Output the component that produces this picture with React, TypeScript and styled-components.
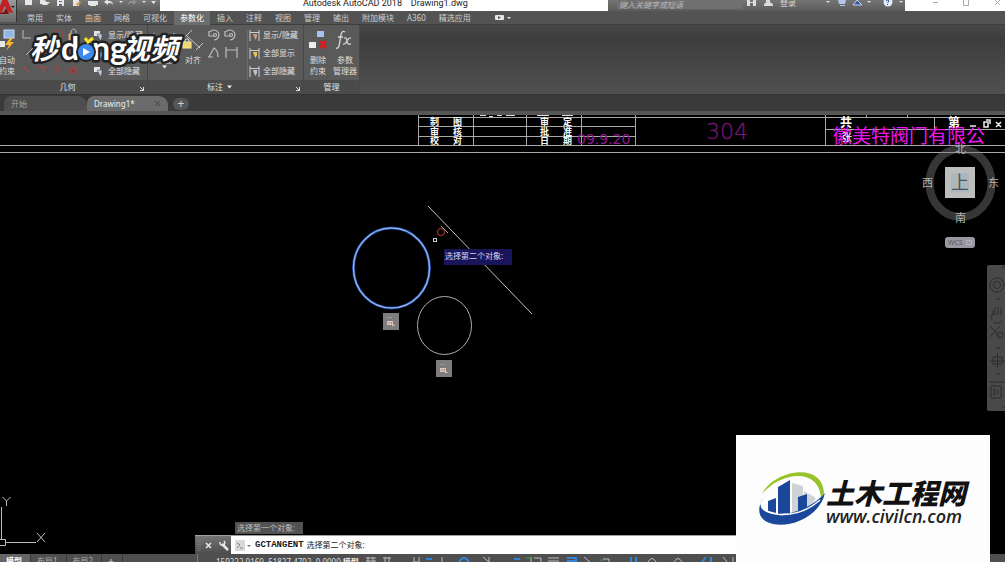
import React from "react";
import styled, { createGlobalStyle } from "styled-components";

const sans = '"Noto Sans", "Noto Sans CJK SC", sans-serif';

const GlobalStyle = createGlobalStyle`
  * { box-sizing: border-box; }
  body { margin: 0; background: #000; font-family: ${sans}; }
  button { border: 0; padding: 0; margin: 0; background: none; color: inherit; font: inherit; white-space: nowrap; }
  svg { display: block; flex: none; }
`;

const Window = styled.div`
  position: relative;
  display: flex;
  flex-direction: column;
  height: 100vh;
  overflow: hidden;
  color: #d2d2d2;
  font-size: 8px;
  line-height: 12px;
`;

/* Title bar */
const TitleBar = styled.header`
  display: flex;
  height: 11px;
  background: #fff;
`;
const QuickAccess = styled.div`
  width: 160px;
  padding-left: 22px;
  background: linear-gradient(#777, #5c5c5c);
  overflow: hidden;
`;
const Caption = styled.h1`
  flex: 1;
  margin: 0;
  padding-left: 143px;
  color: #222;
  font: 400 9px/7px Roboto, sans-serif;
  white-space: pre;
`;
const SearchArea = styled.div`
  display: flex;
  width: 297px;
  background: linear-gradient(#757575, #5b5b5b);
  overflow: hidden;
`;
const SearchBox = styled.input`
  width: 126px;
  height: 9px;
  margin-left: 9px;
  padding: 0 2px;
  border: 0;
  background: #707070;
  font: italic 8px/8px ${sans};
  &::placeholder { color: #b4b4b4; line-height: 5px; }
`;
const SignIn = styled.button`
  width: 22px;
  height: 5px;
  line-height: 5px;
  color: #d5d5d5;
`;
const WindowControls = styled.div`
  width: 100px;
`;
const AppButton = styled.button`
  position: absolute;
  top: 0;
  left: 0;
  width: 17px;
  height: 22px;
  background: linear-gradient(#9a9a9a, #6a6a6a);
  border-right: 1px solid #333;
`;

/* Ribbon */
const MenuTabs = styled.nav`
  display: flex;
  gap: 1px;
  height: 14px;
  padding-left: 21px;
  background: #535353;
  border-bottom: 1px solid #3e3e3e;
`;
const MenuTab = styled.button<{ $active?: boolean }>`
  height: 14px;
  padding: 0 6px;
  line-height: 14px;
  color: ${(p) => (p.$active ? "#fff" : "#cfcfcf")};
  background: ${(p) => (p.$active ? "#6c6c6c" : "transparent")};
`;
const Ribbon = styled.div`
  display: flex;
  height: 70px;
  background: linear-gradient(#484848, #3d3d3d 20%, #505050);
  border-bottom: 1px solid #333;
`;
const Panel = styled.section<{ $width: number }>`
  display: flex;
  flex-direction: column;
  width: ${(p) => p.$width}px;
  border-right: 1px solid #484848;
  background: #5a5a5a;
`;
const PanelBody = styled.div`
  display: flex;
  flex: 1;
  overflow: hidden;
`;
const PanelTitle = styled.div<{ $launcher?: boolean }>`
  display: flex;
  align-items: center;
  justify-content: center;
  gap: 4px;
  position: relative;
  height: 14px;
  padding-right: ${(p) => (p.$launcher ? 12 : 0)}px;
  background: #4b4b4b;
  color: #e2e2e2;
`;
const Launcher = styled.svg`
  position: absolute;
  right: 3px;
  bottom: 3px;
`;
const BigTool = styled.button<{ $width: number }>`
  display: flex;
  flex-direction: column;
  align-items: center;
  width: ${(p) => p.$width}px;
  padding-top: 4px;
  line-height: 11px;
  color: #dedede;
`;
const ToolList = styled.div`
  display: flex;
  flex-direction: column;
  gap: 6px;
  padding-top: 4px;
`;
const ListTool = styled.button`
  display: flex;
  align-items: center;
  gap: 3px;
  height: 12px;
  color: #e2e2e2;
`;

/* File tabs */
const FileTabs = styled.nav`
  display: flex;
  align-items: flex-end;
  height: 20px;
  padding-left: 4px;
  background: #3a3a3a;
  border-bottom: 4px solid #565656;
`;
const FileTab = styled.button<{ $active?: boolean; $width: number }>`
  display: flex;
  align-items: center;
  justify-content: space-between;
  width: ${(p) => p.$width}px;
  height: 15px;
  padding: 0 8px 0 7px;
  border-radius: 7px 9px 0 0;
  color: ${(p) => (p.$active ? "#f0f0f0" : "#a2a2a2")};
  background: ${(p) => (p.$active ? "#6b6b6b" : "#4e4e4e")};
`;
const AddTab = styled.button`
  width: 16px;
  height: 12px;
  margin: 0 0 1px 5px;
  border-radius: 6px;
  background: #565656;
  font-size: 12px;
  line-height: 12px;
`;

/* Drawing area */
const Canvas = styled.main`
  position: relative;
  flex: 1;
  min-height: 0;
  overflow: hidden;
  background: #000;
`;
const Drawing = styled.svg`
  width: 100%;
  height: 100%;
  font-family: ${sans};
`;
const ViewCube = styled.svg`
  position: absolute;
  top: 24px;
  right: 0;
  font-family: ${sans};
`;
const NavBar = styled.aside`
  position: absolute;
  top: 150px;
  right: 0;
  width: 18px;
  height: 146px;
  border-radius: 2px 0 0 2px;
  background: #494949;
`;
const Prompt = styled.div`
  position: absolute;
  top: 134px;
  left: 444px;
  width: 68px;
  height: 16px;
  padding-left: 1px;
  background: #19155c;
  color: #d6d6ec;
  line-height: 14px;
  white-space: nowrap;
`;
const Axes = styled.svg`
  position: absolute;
  bottom: 0;
  left: 0;
`;
const CommandArea = styled.div`
  position: absolute;
  right: 15px;
  bottom: 0;
  left: 195px;
  color: #1b1b1b;
`;
const History = styled.div`
  width: 68px;
  height: 12px;
  margin: 0 0 1px 40px;
  padding-left: 2px;
  background: #525252;
  color: #bdbdbd;
  white-space: nowrap;
`;
const CommandLine = styled.label`
  display: flex;
  align-items: center;
  height: 19px;
  border-top: 1px solid #a0a0a0;
  background: #fff;
`;
const CommandTools = styled.span`
  width: 36px;
  height: 18px;
  margin-right: 4px;
  background: linear-gradient(#757575, #4c4c4c);
`;
const CommandName = styled.b`
  margin: 0 3px 0 4px;
  font: bold 9px/12px "Liberation Mono", monospace;
`;
const CommandInput = styled.input`
  flex: 1;
  min-width: 0;
  height: 12px;
  padding: 0;
  border: 0;
  outline: 0;
  color: #222;
  font: 8px/12px ${sans};
`;

/* Status bar */
const StatusBar = styled.footer`
  display: flex;
  height: 8px;
  background: #4f4f4f;
  overflow: hidden;
`;
const LayoutTabs = styled.nav`
  display: flex;
  width: 198px;
  border-right: 1px solid #777;
`;
const LayoutTab = styled.button<{ $active?: boolean }>`
  height: 14px;
  padding: 0 8px 0 6px;
  border-right: 1px solid #393939;
  color: ${(p) => (p.$active ? "#fff" : "#ababab")};
  background: ${(p) => (p.$active ? "#666" : "transparent")};
  font-weight: ${(p) => (p.$active ? 700 : 400)};
  line-height: 14px;
`;
const Coordinates = styled.span`
  padding: 0 2px 0 18px;
  color: #ddd;
  line-height: 16px;
  white-space: nowrap;
`;
const ModelSpace = styled.button`
  height: 16px;
  padding: 0 6px 0 0;
  color: #eee;
  font-weight: 700;
  line-height: 16px;
`;

/* Overlaid brand marks */
const VideoMark = styled.svg`
  position: absolute;
  top: 29px;
  left: 26px;
  font-family: ${sans};
`;
const SiteCard = styled.a`
  position: absolute;
  right: 15px;
  bottom: 0;
  width: 254px;
  height: 127px;
  padding: 35px 0 0 22px;
  display: flex;
  background: #fdfdfd;
  color: #111;
  text-decoration: none;
`;
const SiteText = styled.span`
  display: flex;
  flex-direction: column;
  padding-top: 7px;
  white-space: nowrap;
`;
const SiteName = styled.strong`
  font: italic 900 28px/30px "Noto Sans CJK SC", sans-serif;
`;
const SiteUrl = styled.span`
  color: #222;
  font: italic 600 18px/18px "Open Sans", sans-serif;
`;

const MENU = ["常用", "实体", "曲面", "网格", "可视化", "参数化", "插入", "注释", "视图", "管理", "输出", "附加模块", "A360", "精选应用"];

const GRID_LABELS: [string, number, number][] = [
  ["制", 430, 10], ["图", 453, 10], ["审", 540, 10], ["定", 563, 10],
  ["审", 430, 20], ["核", 453, 20], ["批", 540, 20], ["准", 563, 20],
  ["校", 430, 29], ["对", 453, 29], ["日", 540, 29], ["期", 563, 29],
];

const Arrow = () => (
  <svg width="5" height="4"><path d="M0 0.5h5L2.5 3.5z" fill="#eee" /></svg>
);
const Corner = () => (
  <Launcher width="4" height="4"><path d="M0 0.5h1M3.5 0v4M0 3.5h4M1 1l2 2" stroke="#ddd" fill="none" /></Launcher>
);
const DimensionIcon = ({ tone }: { tone: string }) => (
  <svg width="12" height="11" fill="none">
    <path d="M2 0v11M11 0v11M2 2.5h9" stroke="#cfcfcf" />
    <path d="M5 4h4v3L7.500 10 6 7z" fill={tone} />
  </svg>
);
const ConstraintIcon = () => (
  <svg width="12" height="11">
    <rect x="1" y="1" width="6" height="5" fill="#e3e3ec" />
    <path d="M4 4h5v3L7.5 11 6 8z" fill="#b9c7de" stroke="#444" strokeWidth=".5" />
  </svg>
);
const TangentMark = ({ x, y }: { x: number; y: number }) => (
  <g transform={`translate(${x} ${y})`}>
    <rect width="16" height="17" fill="#7d7d7d" />
    <path d="M4 4.500h5" stroke="#999" />
    <path d="M4 8h6v4H4zM9 10l3 3H9z" fill="#dcc4b6" />
    <path d="M6 9v2M8.500 9v2" stroke="#a0705c" strokeWidth=".7" />
  </g>
);

export default function App() {
  return (
    <Window>
      <GlobalStyle />
      <TitleBar>
        <QuickAccess>
          <svg width="138" height="10" fill="#e6e6e6">
            <path d="M3 0h7v5H3zM18 0h4l2 1v3h-6zM20 5l2-3h6l-3 3zM35 0h7v6h-7z" />
            <path d="M37 1h3v1h-3zM37 4h3v2h-3z" fill="#5b6c89" />
            <path d="M51 0h6v6h-6z" /><path d="M54 4l4-3 1 2-4 3z" fill="#d29a4a" />
            <path d="M66 1h10v4H66zM68 4h6v2h-6z" />
            <path d="M82 2l4-3v2c4 0 5 2 5 4-1-2-3-2-5-2v2zM97 1h4l-2 2z" />
            <path d="M115 2l-4-3v2c-4 0-5 2-5 4 1-2 3-2 5-2v2z" fill="#919191" />
            <path d="M120 1h4l-2 2zM129 1h5l-2.500 3z" />
          </svg>
        </QuickAccess>
        <Caption>{"Autodesk AutoCAD 2018    Drawing1.dwg"}</Caption>
        <SearchArea>
          <SearchBox aria-label="搜索" placeholder="键入关键字或短语" />
          <svg width="34" height="9" fill="#ddd">
            <path d="M4 0h3v6H4zM10 0h3v6h-3zM7 2h3v1H7zM21 5c0-2 2-3 4-3s5 1 5 3v1h-9zM23 0h4v2h-4z" />
          </svg>
          <SignIn>登录</SignIn>
          <svg width="104" height="10" fill="#ddd">
            <path d="M27 1h4l-2 2zM68 1h4l-2 2zM100 1h4l-2 2z" />
            <path d="M39 0h8l-1 4h-6zM41 5h5v1h-5z" fill="#b5c5e5" />
            <path d="M54 5l4-5 5 5z" fill="#31569d" stroke="#c8d4e8" />
            <circle cx="89" cy="2" r="4.500" fill="#e7eefb" />
            <path d="M87 1q2-2 3 0l-1.500 2M88.500 4v1" stroke="#31569d" fill="none" />
          </svg>
        </SearchArea>
        <WindowControls>
          <svg width="100" height="8" fill="none" stroke="#aaa">
            <path d="M28 2.500h5M58.500 0v5.500h5V0M90 0l5 5M95 0l-5 5" />
          </svg>
        </WindowControls>
      </TitleBar>

      <MenuTabs>
        {MENU.map((name) => (
          <MenuTab key={name} $active={name === "参数化"}>{name}</MenuTab>
        ))}
        <MenuTab aria-label="显示选项">
          <svg width="28" height="8">
            <rect x="11" y="1" width="9" height="5" rx="1" fill="#e6e6e6" />
            <path d="M14 2l3 1.500-3 1.500z" fill="#555" />
            <path d="M23 3h4l-2 2z" fill="#e6e6e6" />
          </svg>
        </MenuTab>
      </MenuTabs>
      <AppButton aria-label="应用程序菜单">
        <svg width="16" height="22">
          <path d="M-4 15L5-6l8 19-5-1-3-6-4 7z" fill="#c22126" />
          <path d="M-2 14l6-2 2-4 3 6z" fill="#7d1015" />
          <path d="M11 6h4l-2 2z" fill="#222" />
        </svg>
      </AppButton>

      <Ribbon>
        <Panel $width={148}>
          <PanelBody>
            <BigTool $width={14}>
              <svg width="16" height="25">
                <rect x="5" y="1" width="10" height="8" fill="#8fb6e5" stroke="#cddcf0" />
                <rect x="0" y="12" width="6" height="6" fill="#e7e7e7" />
                <path d="M11 9l-5 7h4l-3 6 8-9h-4l3-4z" fill="#f4b632" />
              </svg>
              自动<br />约束
            </BigTool>
            <svg width="79" height="57" fill="none" stroke="#b9b9b9">
              <path d="M9 5v8h8" /><path d="M12 30l8-8M28 26h12" />
              <circle cx="44" cy="10" r="5" stroke="#a04848" />
              <path d="M57 9v-3q3-4 5 0v3" /><path d="M55 9h9v6h-9z" fill="#d3a746" />
              <path d="M9 41l7 7M24 42h6v6M41 41q8 3 0 7" stroke="#a04848" strokeWidth="1.500" />
              <path d="M56 43h6v5h-6z" fill="#8a3d3d" stroke="#a04848" />
            </svg>
            <ToolList>
              <ListTool><ConstraintIcon />显示/隐藏</ListTool>
              <ListTool><ConstraintIcon />全部显示</ListTool>
              <ListTool><ConstraintIcon />全部隐藏</ListTool>
            </ToolList>
          </PanelBody>
          <PanelTitle $launcher><span>几何</span><Corner /></PanelTitle>
        </Panel>
        <Panel $width={156}>
          <PanelBody>
            <BigTool $width={32}>
              <svg width="22" height="25" fill="none" stroke="#c8c8c8"><path d="M1 4v14M21 4v14M1 7h20" /></svg>
              线性
              <Arrow />
            </BigTool>
            <BigTool $width={26}>
              <svg width="22" height="25" fill="none" stroke="#c8c8c8">
                <path d="M2 9l8-8M4 6l14 13M14 21l7-7M1 11v-2" />
                <path d="M3 13v-2q2-3 4 0v2" stroke="#eee" />
                <rect x="1" y="13" width="8" height="6" fill="#f2d56d" stroke="#f7e8a4" />
              </svg>
              对齐
            </BigTool>
            <svg width="42" height="56" fill="none" stroke="#bcbcbc" strokeWidth="1.200">
              <path d="M4 7a5 5 0 1 1 4 8M3 6v5h5M20 7a5 5 0 1 1 4 8M19 6v5h5" />
              <circle cx="9" cy="10" r="1.500" /><circle cx="25" cy="10" r="1.500" />
              <path d="M3 32l5-9q4 2 4 9M2 32h5M20 22v11M31 22v11M20 25h11" />
              <path d="M41.500 5v51" stroke="#6b6b6b" />
            </svg>
            <ToolList>
              <ListTool><DimensionIcon tone="#c99b82" />显示/隐藏</ListTool>
              <ListTool><DimensionIcon tone="#f0c453" />全部显示</ListTool>
              <ListTool><DimensionIcon tone="#b4c6e6" />全部隐藏</ListTool>
            </ToolList>
          </PanelBody>
          <PanelTitle $launcher><span>标注</span><Arrow /><Corner /></PanelTitle>
        </Panel>
        <Panel $width={56}>
          <PanelBody>
            <BigTool $width={28}>
              <svg width="20" height="25">
                <rect x="9" y="2" width="7" height="6" fill="#a6c4ef" />
                <rect x="1" y="13" width="7" height="6" fill="#ececec" />
                <path d="M12 12l6 7M18 12l-6 7" stroke="#c92020" strokeWidth="3" />
              </svg>
              删除<br />约束
            </BigTool>
            <BigTool $width={26}>
              <svg width="20" height="25" fill="none" stroke="#d6d6d6" strokeWidth="1.300">
                <path d="M10 3q-3-2-4 3L4 17q-1 3-3 2M3 8h5" />
                <path d="M9 9q3-1 3 3t4 3M16 9q-2-1-4 3t-4 3" />
              </svg>
              参数<br />管理器
            </BigTool>
          </PanelBody>
          <PanelTitle><span>管理</span></PanelTitle>
        </Panel>
      </Ribbon>

      <FileTabs>
        <FileTab $width={83}>开始</FileTab>
        <FileTab $width={81} $active>
          Drawing1*
          <svg width="5" height="5"><path d="M0 0l5 5M5 0L0 5" stroke="#444" /></svg>
        </FileTab>
        <AddTab aria-label="新图形">+</AddTab>
      </FileTabs>

      <Canvas>
        <Drawing>
          <g stroke="#a9a9a9" shapeRendering="crispEdges">
            <path d="M418.500 0v30M473.500 0v30M526.500 0v30M581.500 0v30M635.500 0v30M418 11.500h218M418 21.500h218" />
            <path d="M825.500 0v30M934.500 2v12M866.500 0v2M907.500 0v2" />
            <line x1="418" x2="100%" y1="2.500" y2="2.500" />
            <line x1="825" x2="100%" y1="14.500" y2="14.500" />
            <line x1="0" x2="100%" y1="30.500" y2="30.500" />
            <line x1="0" x2="100%" y1="37.500" y2="37.500" />
          </g>
          <path d="M480 .5h6M489 1.500h4M497 .5h5M506 .5h9M537 .5h12M562 .5h11" stroke="#ddd" />
          <g fill="#fff" fontSize="9" fontWeight="700">
            {GRID_LABELS.map(([label, x, y]) => (
              <text key={`${x}-${y}`} x={x} y={y}>{label}</text>
            ))}
          </g>
          <text x="577" y="29" fill="#8f178f" fontSize="14" fontFamily="DejaVu Sans">09.9.20</text>
          <text x="706" y="24" fill="#7a147a" fontSize="22" fontFamily="DejaVu Sans" fontWeight="200" stroke="#7a147a" strokeWidth=".3">304</text>
          <text x="833" y="28" fill="#ea16ea" fontSize="19">徽美特阀门有限公</text>
          <g fill="#fff" fontSize="12" fontWeight="700">
            <text x="840" y="12">共</text>
            <text x="948" y="12">第</text>
          </g>
          <text x="842" y="26" fill="#fff" fontSize="10">张</text>
          <path d="M970 11h6M984 7h4v5h-4zM986 5h4v4M996 7l5 5M1001 7l-5 5" stroke="#eee" strokeWidth="1.500" fill="none" />

          <g fill="none">
            <ellipse cx="391.500" cy="153" rx="38" ry="40" stroke="#173a86" strokeWidth="3" />
            <ellipse cx="391.500" cy="153" rx="38" ry="40" stroke="#8fb2ef" strokeWidth="1.500" />
            <ellipse cx="444.500" cy="210.500" rx="27" ry="29" stroke="#aeaeae" />
            <path d="M428 91L532 199" stroke="#c4c1bb" />
            <circle cx="441" cy="117" r="3.500" stroke="#852720" strokeWidth="1.500" />
            <path d="M441 111l7 7" stroke="#aaa" />
            <rect x="433.500" y="123.500" width="3" height="3" stroke="#ccc" />
          </g>
          <TangentMark x={383} y={198} />
          <TangentMark x={436} y={245} />
        </Drawing>
        <Prompt>选择第二个对象:</Prompt>

        <ViewCube width="90" height="114">
          <ellipse cx="45.500" cy="44" rx="31" ry="34" fill="none" stroke="#777" strokeOpacity=".45" strokeWidth="8" />
          <rect x="30" y="28" width="30" height="31" fill="#bcbebe" />
          <rect x="36" y="34" width="18" height="19" fill="#adb7ba" />
          <g fill="#b2b2b2" fontSize="11">
            <text x="40" y="14">北</text>
            <text x="7" y="48">西</text>
            <text x="73" y="48">东</text>
            <text x="40" y="83">南</text>
          </g>
          <text x="36" y="50" fill="#45565f" fontSize="18">上</text>
          <rect x="30" y="98" width="30" height="11" rx="3" fill="#9998a2" />
          <text x="33" y="106" fill="#5b5a63" fontSize="7">WCS</text>
          <rect x="51.500" y="101.500" width="5" height="4" fill="none" stroke="#b4b3bd" />
        </ViewCube>

        <NavBar aria-label="导航栏">
          <svg width="18" height="146" fill="none" stroke="#2d2d2d">
            <circle cx="10" cy="20" r="7" /><circle cx="10" cy="20" r="3.500" />
            <path d="M9 34h4M5 55q-3-6 1-5v-5M8 50v-8M11 50v-8M14 50v-7M6 57q5 3 9-1M3 61l10 11M13 61L3 72" />
            <circle cx="13" cy="70" r="3" /><path d="M9 83h4M10.500 88v15M3 96h15M6 92h9v7H6zM9 109h4M3 117h15M4 121h10v12H4z" />
            <path d="M7 124l5 3-5 3zM15 2h3M15 142h3" />
          </svg>
        </NavBar>

        <Axes width="50" height="64" fill="none" stroke="#bdbdbd">
          <path d="M2.500 7l4 4 4-4M6.500 11v5M1.500 17v32M0 49.500h5.500v6H0M5 52.500h31M37 43l8 9M45 43l-8 9" />
        </Axes>

        <CommandArea>
          <History>选择第一个对象:</History>
          <CommandLine>
            <CommandTools>
              <svg width="36" height="18" fill="none" stroke="#e8e8e8">
                <path d="M3 4v11M5 4v11" stroke="#888" strokeDasharray="1 1" />
                <path d="M11 7l5 5M16 7l-5 5" strokeWidth="1.500" />
                <path d="M27 8l6 6" strokeWidth="2.500" /><path d="M25 6q0 4 3 3t1-4" strokeWidth="1.500" />
              </svg>
            </CommandTools>
            <svg width="16" height="12">
              <rect width="10" height="11" y="1" fill="#d9d9d9" />
              <path d="M2 4l3 2-3 3M5 9h3" stroke="#888" fill="none" />
              <path d="M12 6h4l-2 2z" fill="#777" />
            </svg>
            <CommandName>GCTANGENT</CommandName>
            <CommandInput defaultValue="选择第二个对象:" />
          </CommandLine>
        </CommandArea>
      </Canvas>

      <StatusBar>
        <LayoutTabs>
          <LayoutTab $active>模型</LayoutTab>
          <LayoutTab>布局1</LayoutTab>
          <LayoutTab>布局2</LayoutTab>
          <LayoutTab aria-label="新布局">
            <svg width="6" height="8"><path d="M3 2v6M0 5h6" stroke="#ccc" /></svg>
          </LayoutTab>
        </LayoutTabs>
        <Coordinates>159222.9169, 51827.4792, 0.0000</Coordinates>
        <ModelSpace>模型</ModelSpace>
        <svg width="385" height="8" fill="none" stroke="#bdbdbd">
          <path d="M1 4h10M1 7h10M3 3v5M8 3v5M18 4h8M20 3v5M24 3v5M49 3v5h5V3M77 3v5" />
          <path d="M61 5h6M94 8q5-8 10 0M149 5h6M202 4h9v4M202 7h9M266 3v5M271 3v5M341 3l-4 5M346 3v5" stroke="#3484da" strokeWidth="2" />
          <path d="M118 3l6 5V3M166 3v5M169 4h7v4M183 4h11M183 7h11M219 3l6 5M238 5h6v3M283 8q4-7 8 0M309 8q4-7 8 0M358 3l4 5M368 3v5" />
          <path d="M161 4h5M234 6h5" stroke="#35a044" />
        </svg>
      </StatusBar>

      <VideoMark width="160" height="46">
        <g fontSize="28" fontWeight="700" fontStyle="italic" fill="#fff" stroke="#222" strokeWidth="5" strokeLinejoin="round" paintOrder="stroke">
          <text x="4" y="30">秒</text>
          <text x="96" y="30">视频</text>
        </g>
        <g fontFamily="Lato" fontSize="32" fontWeight="700" fill="#fff" stroke="#222" strokeWidth="5" strokeLinejoin="round" paintOrder="stroke">
          <text x="35" y="31">d</text>
          <text x="66" y="31">ng</text>
        </g>
        <circle cx="60" cy="23" r="10" fill="#222" />
        <circle cx="60" cy="23" r="8" fill="#3d8af0" />
        <path d="M57 19l7 4-7 4z" fill="#fff" />
        <path d="M59 9l3 4 5-4" fill="none" stroke="#f5df29" strokeWidth="3" />
      </VideoMark>

      <SiteCard href="#">
        <svg width="68" height="56">
          <path d="M4 24C16-1 66-9 66 24q0 5-3 9c2-36-39-33-59-9z" fill="#97c42b" />
          <path d="M34 13l11 3v26l-11 3zM46 21l12 7-7 12-6 2z" fill="#cfd3d8" />
          <path d="M20 17l12-7v33l-12 1zM10 31l8-3v15l-8-2zM40 27l9-3v16l-9 2z" fill="#1b479b" />
          <path d="M5 28c-14 20 35 25 62-5C57 64-16 65 5 28z" fill="#1b479b" />
          <path d="M3 33c3 15 36 17 59-3" fill="none" stroke="#fff" strokeWidth="1.500" />
        </svg>
        <SiteText>
          <SiteName>土木工程网</SiteName>
          <SiteUrl>www.civilcn.com</SiteUrl>
        </SiteText>
      </SiteCard>
    </Window>
  );
}
